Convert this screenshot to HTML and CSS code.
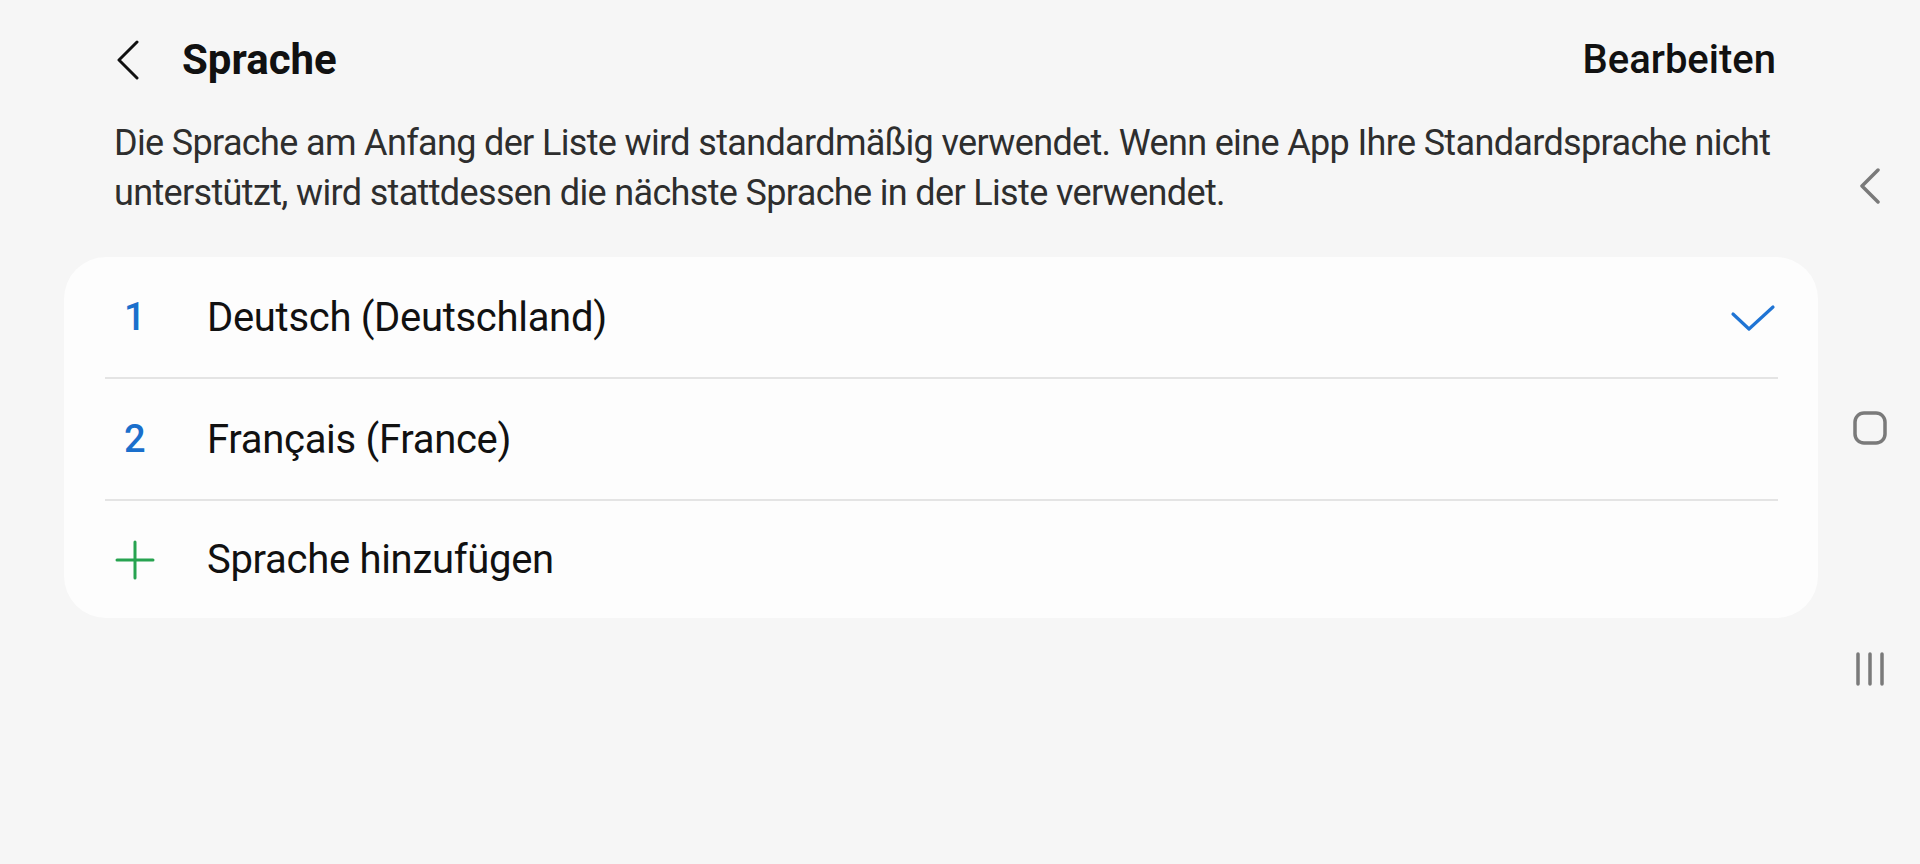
FILE: index.html
```html
<!DOCTYPE html>
<html lang="de">
<head>
<meta charset="utf-8">
<title>Sprache</title>
<link rel="stylesheet" href="styles.css">
</head>
<body>
<div class="screen">
  <main class="main">
    <header class="appbar">
      <div class="appbar-left">
        <svg class="back" width="24" height="40" viewBox="0 0 24 40"><path d="M21 2 L3 20 L21 38" fill="none" stroke="#111" stroke-width="3" stroke-linecap="round" stroke-linejoin="round"/></svg>
        <h1 class="title">Sprache</h1>
      </div>
      <div class="action">Bearbeiten</div>
    </header>
    <p class="desc">Die Sprache am Anfang der Liste wird standardmäßig verwendet. Wenn eine App Ihre Standardsprache nicht unterstützt, wird stattdessen die nächste Sprache in der Liste verwendet.</p>
    <section class="card">
      <div class="row">
        <span class="num">1</span>
        <span class="label">Deutsch (Deutschland)</span>
        <svg class="check" width="46" height="30" viewBox="0 0 46 30"><path d="M3 10 L19 25 L43 3" fill="none" stroke="#1f74d4" stroke-width="3.2" stroke-linecap="round" stroke-linejoin="round"/></svg>
      </div>
      <div class="divider"></div>
      <div class="row">
        <span class="num">2</span>
        <span class="label">Français (France)</span>
      </div>
      <div class="divider"></div>
      <div class="row row-last">
        <svg class="plus" width="40" height="40" viewBox="0 0 40 40"><path d="M20 2 V38 M2 20 H38" fill="none" stroke="#27a350" stroke-width="3" stroke-linecap="round"/></svg>
        <span class="label">Sprache hinzufügen</span>
      </div>
    </section>
  </main>
  <nav class="navbar">
    <svg width="24" height="36" viewBox="0 0 24 36"><path d="M20 2 L4 18 L20 34" fill="none" stroke="#7a7a7a" stroke-width="3.5" stroke-linecap="round" stroke-linejoin="round"/></svg>
    <svg width="34" height="34" viewBox="0 0 34 34"><rect x="2" y="2" width="30" height="30" rx="9" fill="none" stroke="#7a7a7a" stroke-width="3.5"/></svg>
    <svg width="32" height="34" viewBox="0 0 32 34"><path d="M4 2 V32 M16 2 V32 M28 2 V32" fill="none" stroke="#7a7a7a" stroke-width="3.5" stroke-linecap="round"/></svg>
  </nav>
</div>
</body>
</html>
```
FILE: styles.css
```css
* { box-sizing: border-box; }
html, body { margin: 0; padding: 0; }
body {
  background: #f6f6f6;
  font-family: Roboto, "Noto Sans", "Liberation Sans", sans-serif;
  color: #111;
  width: 1920px;
  height: 864px;
  overflow: hidden;
}
.screen {
  display: flex;
  height: 864px;
}
.main {
  width: 1820px;
  padding: 0 2px 0 64px;
}
.appbar {
  height: 118px;
  display: flex;
  align-items: center;
  justify-content: space-between;
  padding: 0 42px 0 52px;
}
.appbar-left {
  display: flex;
  align-items: center;
  gap: 42px;
}
.back { display: block; margin-top: 2px; }
.title {
  margin: 0;
  font-size: 42px;
  font-weight: 700;
  letter-spacing: 0;
  color: #111;
}
.action {
  font-size: 40px;
  font-weight: 500;
  letter-spacing: 0;
  color: #111;
}
.desc {
  margin: 0;
  padding: 0 10px 0 50px;
  font-size: 36px;
  line-height: 50px;
  letter-spacing: -0.65px;
  color: #2e2e2e;
  height: 139px;
}
.card {
  background: #fdfdfd;
  border-radius: 42px;
  padding: 0 40px 0 41px;
}
.row {
  height: 120px;
  display: flex;
  align-items: center;
}
.row-last { height: 117px; }
.num {
  width: 102px;
  padding-left: 19px;
  font-size: 38px;
  font-weight: 500;
  color: #1a6fcc;
}
.plus {
  margin-left: 10px;
  margin-right: 52px;
}
.label {
  flex: 1;
  font-size: 40px;
  letter-spacing: -0.3px;
  color: #111;
}
.check { margin-right: 2px; margin-top: 4px; }
.divider {
  height: 2px;
  background: #e4e4e4;
}
.navbar {
  width: 100px;
  display: flex;
  flex-direction: column;
  align-items: center;
  justify-content: space-between;
  padding: 168px 0 178px 0;
}
.navbar svg { display: block; }
```
